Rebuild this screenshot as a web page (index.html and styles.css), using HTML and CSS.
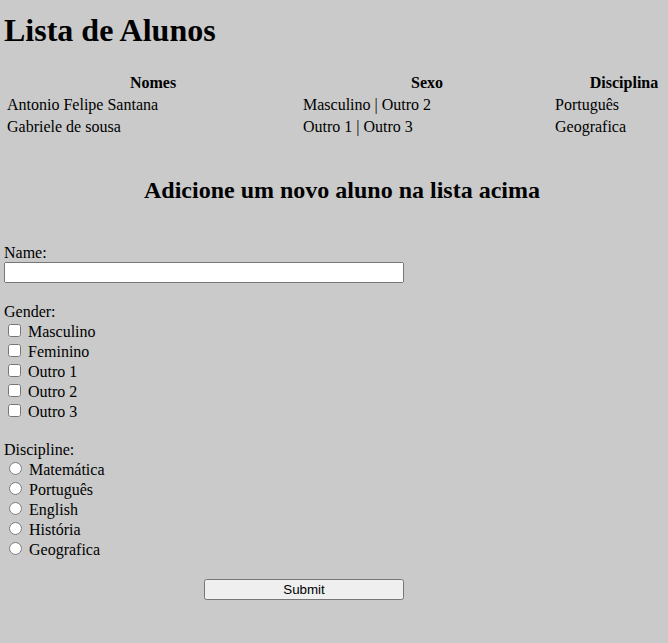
FILE: index.html
```html
<!DOCTYPE html>
<html lang="pt">
<head>
<meta charset="utf-8">
<title>Lista de Alunos</title>
<link rel="stylesheet" href="styles.css">
</head>
<body>
<h1 class="title">Lista de Alunos</h1>
<table class="students">
  <thead>
    <tr>
      <th class="col-name">Nomes</th>
      <th class="col-sex">Sexo</th>
      <th class="col-disc">Disciplina</th>
    </tr>
  </thead>
  <tbody>
    <tr>
      <td>Antonio Felipe Santana</td>
      <td>Masculino | Outro 2</td>
      <td>Português</td>
    </tr>
    <tr>
      <td>Gabriele de sousa</td>
      <td>Outro 1 | Outro 3</td>
      <td>Geografica</td>
    </tr>
  </tbody>
</table>
<h2 class="subtitle">Adicione um novo aluno na lista acima</h2>
<form class="student-form">
  <div class="field">
    <label for="name">Name:</label><br>
    <input class="text-input" type="text" id="name" name="name">
  </div>
  <div class="field">
    <span class="field-label">Gender:</span><br>
    <label class="option"><input type="checkbox" name="g"> Masculino</label><br>
    <label class="option"><input type="checkbox" name="g"> Feminino</label><br>
    <label class="option"><input type="checkbox" name="g"> Outro 1</label><br>
    <label class="option"><input type="checkbox" name="g"> Outro 2</label><br>
    <label class="option"><input type="checkbox" name="g"> Outro 3</label>
  </div>
  <div class="field">
    <span class="field-label">Discipline:</span><br>
    <label class="option"><input type="radio" name="d"> Matemática</label><br>
    <label class="option"><input type="radio" name="d"> Português</label><br>
    <label class="option"><input type="radio" name="d"> English</label><br>
    <label class="option"><input type="radio" name="d"> História</label><br>
    <label class="option"><input type="radio" name="d"> Geografica</label>
  </div>
  <div class="actions">
    <button class="submit" type="button">Submit</button>
  </div>
</form>
</body>
</html>
```

FILE: styles.css
```css
html {
  overflow: hidden;
  background: #cacaca;
}
body {
  margin: 0;
  padding: 4px;
  font-family: "Liberation Serif", "Times New Roman", serif;
  font-size: 16px;
  color: #000;
  background: #cacaca;
}
.title {
  font-size: 32px;
  font-weight: bold;
  margin: 8px 0 22px;
}
.students {
  border-spacing: 2px;
  width: 692px;
  margin: 0;
}
.students th,
.students td {
  padding: 1px;
  text-align: left;
}
.students th {
  text-align: center;
}
.col-name { width: 292px; }
.col-sex { width: 248px; }
.col-disc { width: 138px; }
.subtitle {
  font-size: 24px;
  font-weight: bold;
  text-align: center;
  margin: 38px 0 0;
  padding-left: 16px;
}
.student-form {
  margin-top: 40px;
}
.field {
  margin-bottom: 20px;
}
.text-input {
  box-sizing: border-box;
  width: 400px;
  margin: 0;
}
.submit {
  box-sizing: border-box;
  width: 200px;
  margin: 0 0 0 200px;
  font-family: "Liberation Sans", Arial, sans-serif;
  font-size: 13.333px;
}
```
